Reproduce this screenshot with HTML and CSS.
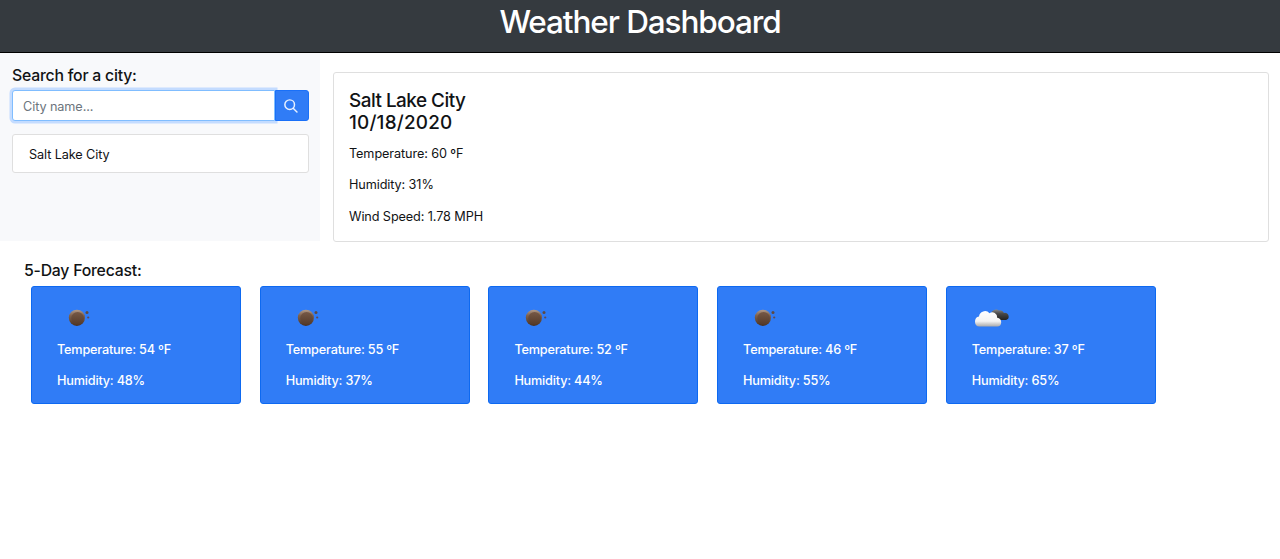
FILE: index.html
```html
<!DOCTYPE html>
<html lang="en">
<head>
<meta charset="utf-8">
<title>Weather Dashboard</title>
<link rel="stylesheet" href="styles.css">
</head>
<body>
<svg class="defs" width="0" height="0" aria-hidden="true">
  <defs>
    <linearGradient id="moon-fill" x1="0" y1="0" x2="0" y2="1"><stop offset="0" stop-color="#b39c8b"/><stop offset=".35" stop-color="#806350"/><stop offset="1" stop-color="#49301f"/></linearGradient>
    <linearGradient id="moon-core" x1="0" y1="0" x2="0" y2="1"><stop offset="0" stop-color="#765846"/><stop offset="1" stop-color="#543a29"/></linearGradient>
    <linearGradient id="cloud-fill" x1="0" y1="0" x2="0" y2="1"><stop offset="0" stop-color="#fff"/><stop offset=".65" stop-color="#f4f4f4"/><stop offset="1" stop-color="#aaa"/></linearGradient>
    <linearGradient id="dark-fill" x1="0" y1="0" x2="0" y2="1"><stop offset="0" stop-color="#888"/><stop offset=".4" stop-color="#484848"/><stop offset="1" stop-color="#222"/></linearGradient>
    <symbol id="clear" viewBox="0 0 40 40">
      <circle cx="19.900" cy="20.800" r="8.100" fill="url(#moon-fill)"/>
      <circle cx="20.600" cy="21.300" r="6.300" fill="url(#moon-core)"/>
      <circle cx="30" cy="15.500" r="1.500" fill="#5d4a45"/>
      <circle cx="31.200" cy="20.500" r="1.100" fill="#5d4a55"/>
    </symbol>
    <symbol id="clouds" viewBox="0 0 40 40">
      <path d="M19 17a5 5 0 0 1 8-3.500a4.500 4.500 0 0 1 5 2.500a3.500 3.500 0 0 1 4.500 2.500c.8 3-1 4.500-3.500 4.500h-8z" fill="url(#dark-fill)"/>
      <path d="M7.500 29.500c-3 0-4.500-2-4.500-4.800s1.500-4.800 4-5.100a6 6 0 0 1 10.500-3.400a5 5 0 0 1 7.700 4.600c2.700.2 4 2 4 4.400c0 2.700-1.400 4.300-4 4.300z" fill="url(#cloud-fill)"/>
    </symbol>
  </defs>
</svg>
<header class="header"><h1>Weather Dashboard</h1></header>
<main>
  <div class="top">
    <aside class="sidebar">
      <h2 class="label">Search for a city:</h2>
      <form class="search">
        <input class="search-input" type="text" placeholder="City name...">
        <button class="search-button" type="button" aria-label="Search">
          <svg width="14" height="14" viewBox="0 0 16 16" fill="none" stroke="#e9f1ff" stroke-width="1.700" stroke-linecap="round"><circle cx="6.500" cy="6.500" r="5.500"/><path d="M10.500 10.500l4.300 4.300"/></svg>
        </button>
      </form>
      <ul class="history"><li>Salt Lake City</li></ul>
    </aside>
    <section class="current">
      <h2><span class="city">Salt Lake City</span><span class="date">10/18/2020</span></h2>
      <p>Temperature: 60 ºF</p>
      <p>Humidity: 31%</p>
      <p>Wind Speed: 1.78 MPH</p>
    </section>
  </div>
  <section class="forecast">
    <h2 class="label">5-Day Forecast:</h2>
    <div class="days">
      <article class="day"><svg class="weather"><use href="#clear"/></svg><p>Temperature: 54 ºF</p><p>Humidity: 48%</p></article>
      <article class="day"><svg class="weather"><use href="#clear"/></svg><p>Temperature: 55 ºF</p><p>Humidity: 37%</p></article>
      <article class="day"><svg class="weather"><use href="#clear"/></svg><p>Temperature: 52 ºF</p><p>Humidity: 44%</p></article>
      <article class="day"><svg class="weather"><use href="#clear"/></svg><p>Temperature: 46 ºF</p><p>Humidity: 55%</p></article>
      <article class="day"><svg class="weather"><use href="#clouds"/></svg><p>Temperature: 37 ºF</p><p>Humidity: 65%</p></article>
    </div>
  </section>
</main>
</body>
</html>
```

FILE: styles.css
```css
* { box-sizing: border-box; }
body { margin: 0; background: #fff; color: #111315; font: 400 12.7px/19px Inter, "Liberation Sans", sans-serif; letter-spacing: -.11px; }
h1, h2, p, ul { margin: 0; padding: 0; }
.defs { display: block; width: 0; height: 0; }
.header { height: 53px; background: #353a3f; border-bottom: 1px solid #000; color: #fff; text-align: center; }
.header h1 { padding-top: 3px; font-size: 31.5px; line-height: 38px; font-weight: 500; letter-spacing: -1.1px; }
.top { display: flex; height: 188px; }
.sidebar { width: 320px; padding: 13px 11.500px 0 12px; background: #f8f9fb; }
.label { font-size: 15.8px; line-height: 19px; font-weight: 500; letter-spacing: -.22px; }
.search { display: flex; height: 31px; margin-top: 5px; }
.search-input { flex: 1; min-width: 0; padding: 2px 10px 0; border: 1px solid #80bdff; border-radius: 3px 0 0 3px; background: #fff; box-shadow: 0 0 0 2.500px #c4dcff; font: inherit; letter-spacing: -.1px; outline: 0; }
.search-input::placeholder { color: #6c757d; opacity: 1; }
.search-button { position: relative; display: flex; align-items: center; justify-content: center; width: 34px; padding: 0 1px 0 0; border: 1px solid #1a70f8; border-radius: 0 3px 3px 0; background: #307cf6; }
.history { margin-top: 13px; list-style: none; }
.history li { height: 39px; padding: 10px 16px; border: 1px solid #dfdfdf; border-radius: 3px; background: #fff; }
.current { flex: 1; margin: 19px 11px 0 12.500px; height: 170px; padding: 17px 15.500px 0; border: 1px solid #dfdfdf; border-radius: 3px; }
.current h2 { margin-bottom: 10px; font-size: 18.9px; line-height: 22px; font-weight: 500; }
.city, .date { display: block; }
.city { letter-spacing: -.5px; }
.date { letter-spacing: .2px; }
.current p { margin-bottom: 12.300px; }
.forecast { padding: 20px 24px 0; }
.days { display: flex; gap: 18.700px; margin: 6px 0 0 7px; }
.day { width: 210px; height: 118px; padding: 10px 25px; border: 1px solid #0d69f1; border-radius: 3px; background: #307cf6; color: #fff; font-weight: 500; letter-spacing: -.2px; }
.day p { margin-bottom: 12px; }
.weather { display: block; width: 40px; height: 40px; margin-bottom: 3px; }
```
